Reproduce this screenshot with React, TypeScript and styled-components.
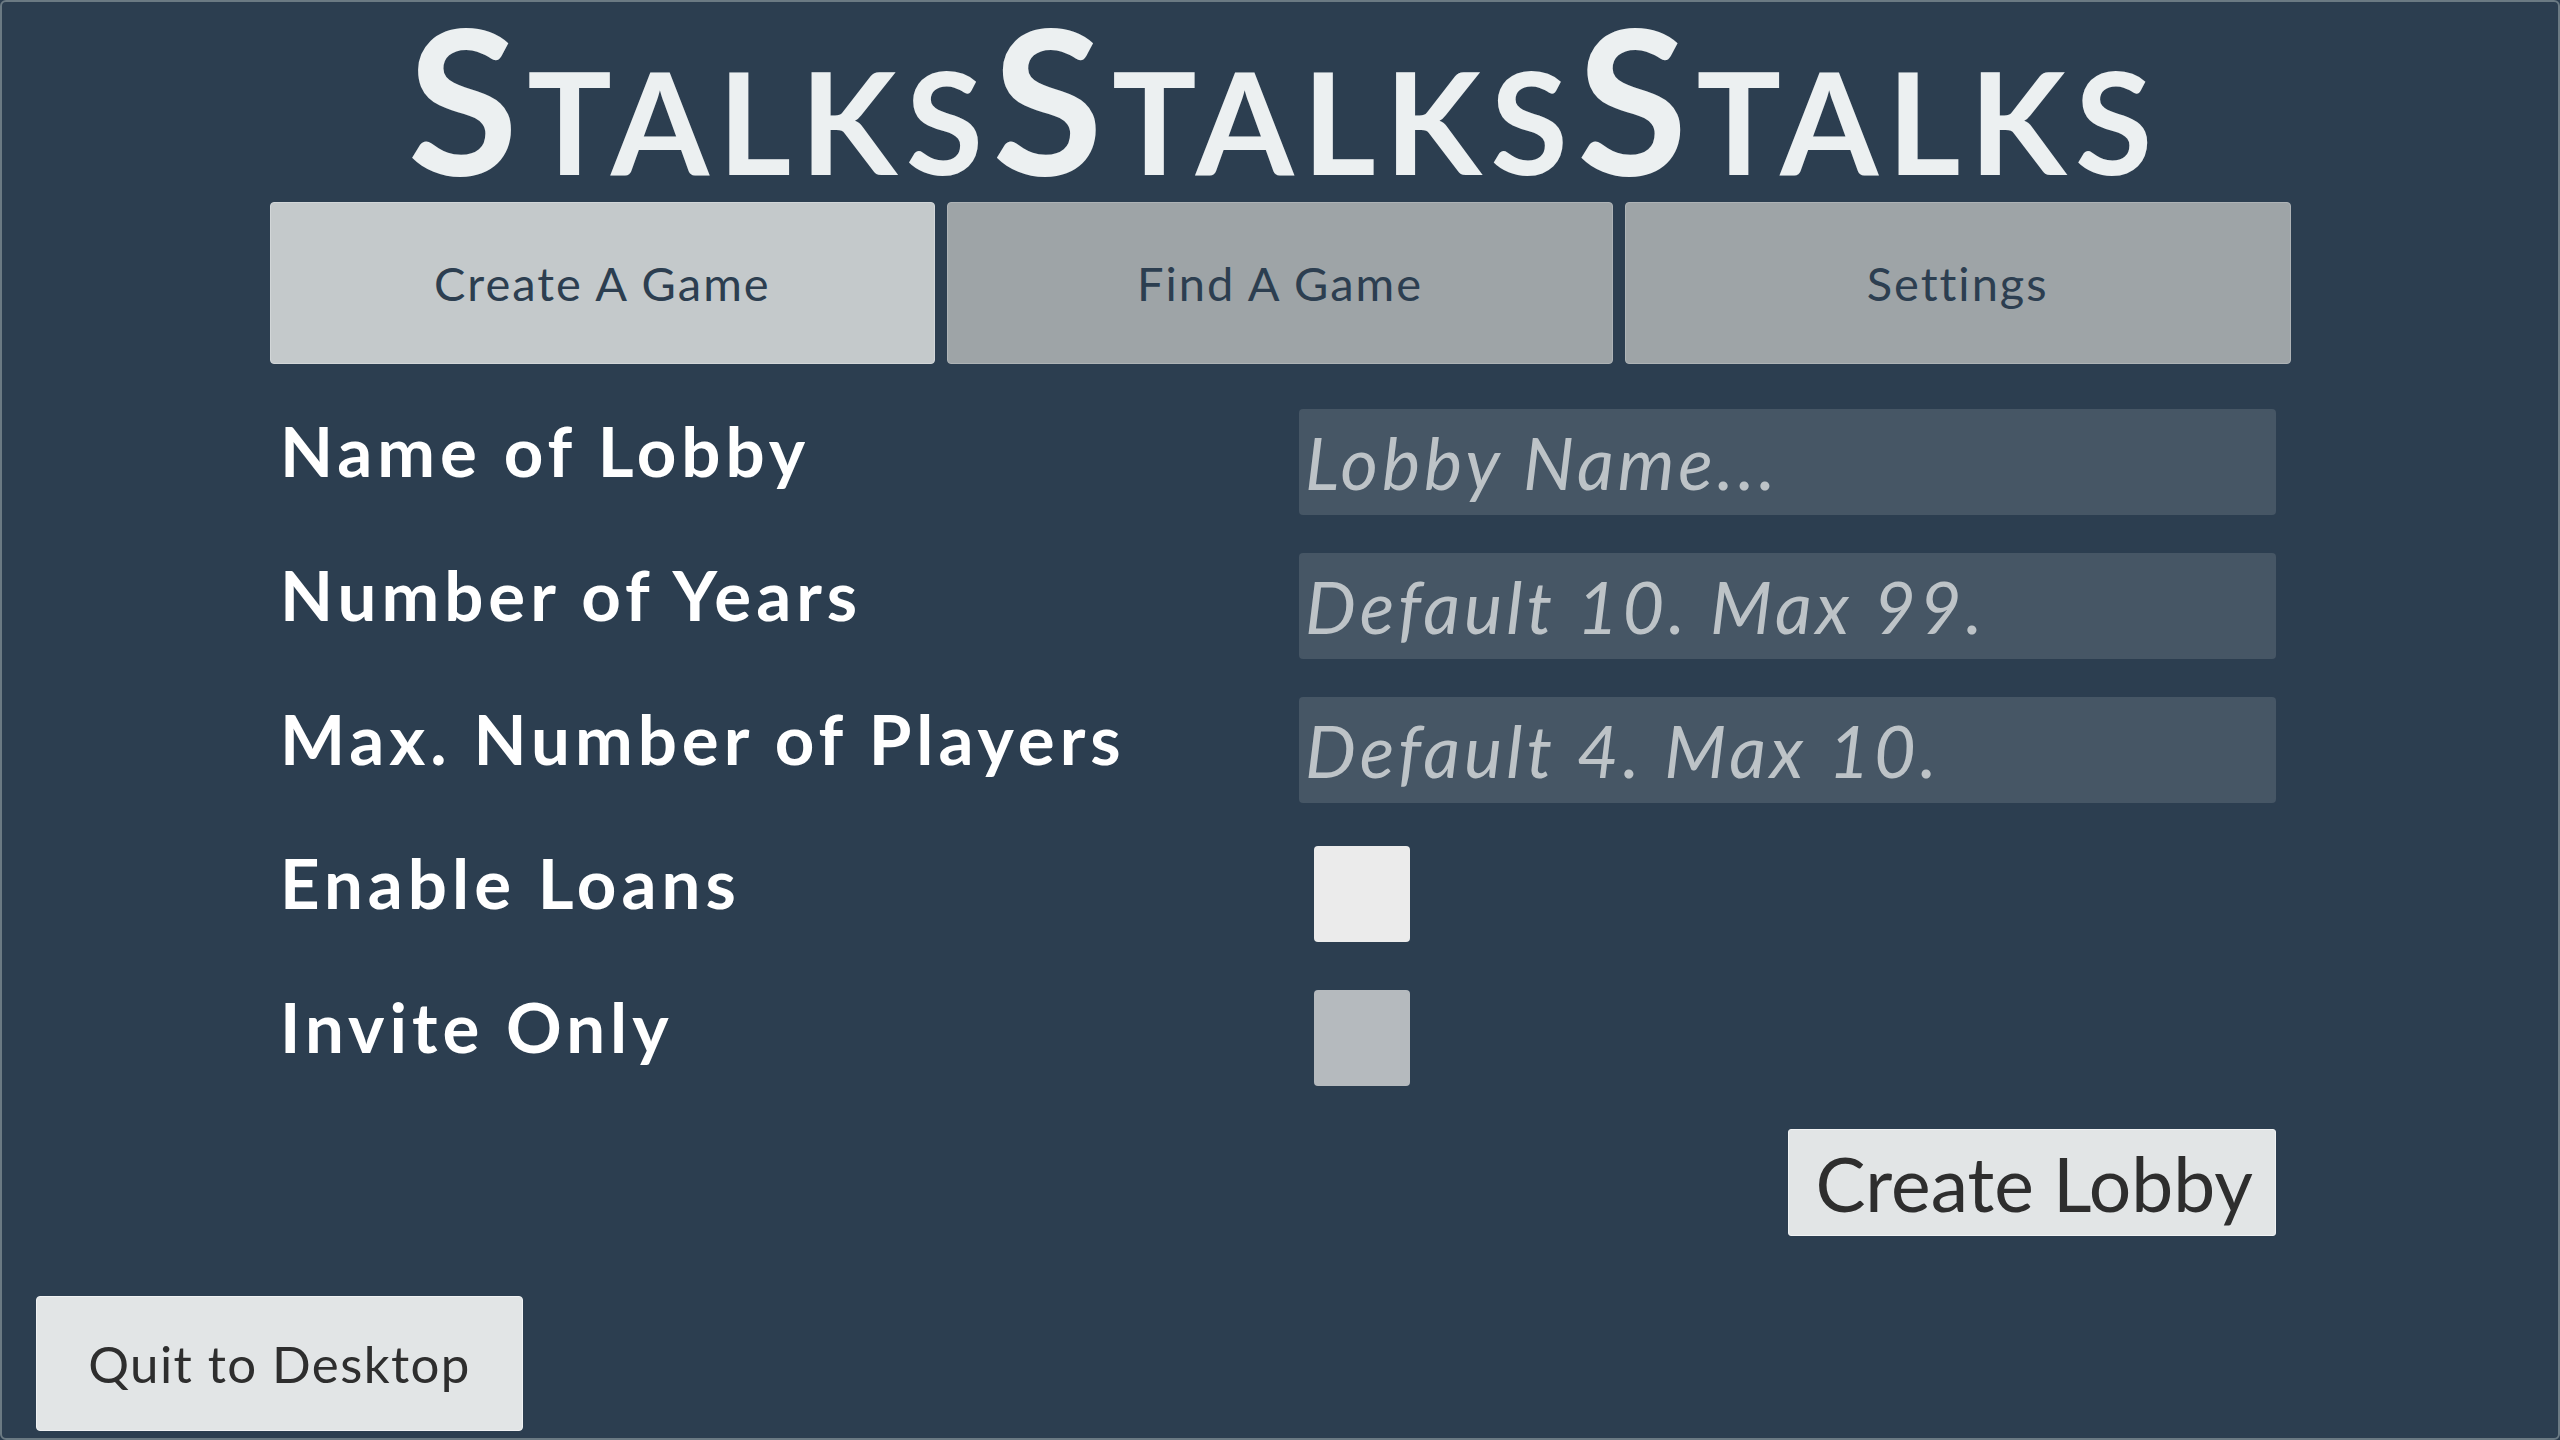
import React from "react";
import styled, { createGlobalStyle } from "styled-components";

const GlobalStyle = createGlobalStyle`
  html, body {
    margin: 0;
    padding: 0;
    background: #2c3e50;
  }
  body {
    font-family: Lato, "Noto Sans", sans-serif;
  }
  * { box-sizing: border-box; }
`;

const Screen = styled.div`
  width: 2560px;
  height: 1440px;
  background: #2c3e50;
  border: 2px solid #6b7a83;
  border-radius: 6px;
  display: flex;
  flex-direction: column;
  align-items: center;
  overflow: hidden;
`;

const Title = styled.h1`
  margin: 0;
  padding-left: 9px;
  font-family: Lato, "Noto Sans", sans-serif;
  font-weight: 700;
  font-size: 202px;
  line-height: 190px;
  font-variant: small-caps;
  color: #ecf0f1;
  letter-spacing: 9px;
  white-space: nowrap;
`;

const TabBar = styled.div`
  margin-top: 10px;
  width: 2021px;
  display: grid;
  grid-template-columns: repeat(3, 1fr);
  gap: 12px;
`;

const Tab = styled.button<{ $active?: boolean }>`
  height: 162px;
  border: 1px solid ${(p) => (p.$active ? "#d2d6d8" : "#aeb3b6")};
  border-radius: 4px;
  background: ${(p) => (p.$active ? "#c4c9cb" : "#9ea4a7")};
  color: #2c3e50;
  font-family: Lato, "Noto Sans", sans-serif;
  font-size: 47px;
  font-weight: 400;
  letter-spacing: 2px;
  padding: 0;
  cursor: pointer;
`;

const Form = styled.div`
  margin-top: 45px;
  width: 1992px;
  display: grid;
  grid-template-columns: 1015px 977px;
  grid-auto-rows: 106px;
  row-gap: 38px;
`;

const Label = styled.div`
  align-self: center;
  margin-left: -4px;
  padding-bottom: 24px;
  color: #ffffff;
  font-family: Lato, "Noto Sans", sans-serif;
  font-weight: 700;
  font-size: 69px;
  line-height: 1;
  letter-spacing: 5px;
  white-space: nowrap;
`;

const TextField = styled.input`
  width: 100%;
  height: 106px;
  border: none;
  border-radius: 4px;
  background: #465665;
  padding: 0 0 0 6px;
  color: #ecf0f1;
  font-family: Lato, "Noto Sans", sans-serif;
  font-style: italic;
  font-size: 72px;
  letter-spacing: 4px;
  outline: none;
  &::placeholder {
    color: #bdc3c7;
    font-style: italic;
  }
`;

const CheckCell = styled.div`
  display: flex;
  align-items: center;
  padding-left: 15px;
`;

const CheckBox = styled.div<{ $checked?: boolean }>`
  width: 96px;
  height: 96px;
  border-radius: 4px;
  background: ${(p) => (p.$checked ? "#ebebeb" : "#b5babe")};
`;

const ActionButton = styled.button`
  grid-column: 2;
  justify-self: end;
  height: 107px;
  padding: 0 22px 0 26px;
  border: 1px solid #f0f2f3;
  border-radius: 3px;
  background: #e2e5e6;
  color: #2e2e2e;
  font-family: Lato, "Noto Sans", sans-serif;
  font-size: 75px;
  font-weight: 400;
  white-space: nowrap;
  cursor: pointer;
`;

const Footer = styled.div`
  margin-top: auto;
  align-self: flex-start;
  padding: 0 0 7px 34px;
`;

const QuitButton = styled.button`
  width: 487px;
  height: 135px;
  border: 1px solid #f0f2f3;
  border-radius: 4px;
  background: #e2e5e6;
  color: #2e2e2e;
  font-family: Lato, "Noto Sans", sans-serif;
  font-size: 51px;
  font-weight: 400;
  letter-spacing: 1.4px;
  cursor: pointer;
`;

export default function App() {
  return (
    <>
      <GlobalStyle />
      <Screen>
        <Title>StalksStalksStalks</Title>
        <TabBar>
          <Tab $active>Create A Game</Tab>
          <Tab>Find A Game</Tab>
          <Tab>Settings</Tab>
        </TabBar>
        <Form>
          <Label>Name of Lobby</Label>
          <TextField placeholder="Lobby Name..." />
          <Label>Number of Years</Label>
          <TextField placeholder="Default 10. Max 99." />
          <Label>Max. Number of Players</Label>
          <TextField placeholder="Default 4. Max 10." />
          <Label>Enable Loans</Label>
          <CheckCell>
            <CheckBox $checked />
          </CheckCell>
          <Label>Invite Only</Label>
          <CheckCell>
            <CheckBox />
          </CheckCell>
          <ActionButton>Create Lobby</ActionButton>
        </Form>
        <Footer>
          <QuitButton>Quit to Desktop</QuitButton>
        </Footer>
      </Screen>
    </>
  );
}
